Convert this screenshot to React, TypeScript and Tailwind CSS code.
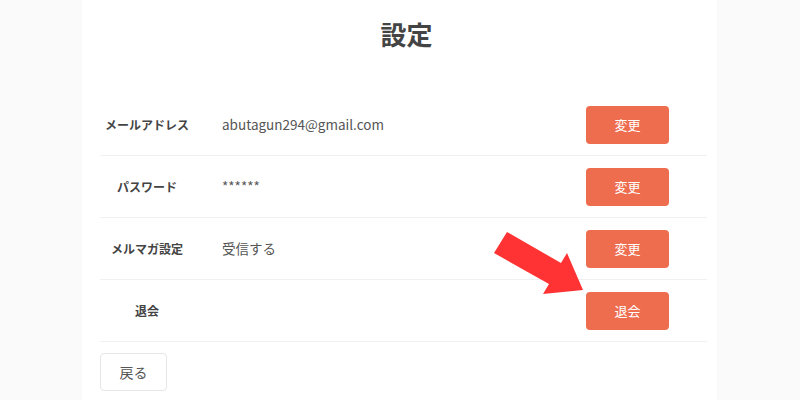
import React from "react";

const rows = [
  { label: "メールアドレス", value: "abutagun294@gmail.com", btn: "変更" },
  { label: "パスワード", value: "******", btn: "変更" },
  { label: "メルマガ設定", value: "受信する", btn: "変更" },
  { label: "退会", value: "", btn: "退会" },
];

export default function App() {
  return (
    <div
      className="relative w-[800px] h-[400px] bg-[#fafafa] overflow-hidden"
      style={{ fontFamily: '"Noto Sans CJK JP", "Noto Sans", sans-serif' }}
    >
      <div className="ml-[82px] w-[635px] h-[400px] bg-white pl-[18px] pr-[10px]">
        <div className="h-[94px] pt-[15px] flex justify-center pl-[6px]">
          <h1 className="text-[26px] font-bold text-[#444] leading-[38px]">設定</h1>
        </div>
        <div className="w-[607px]">
          {rows.map((r) => (
            <div key={r.label} className="h-[62px] flex items-center border-b border-[#f0f0f0]">
              <div className="w-[94px] text-center text-[12px] font-bold text-[#444]">{r.label}</div>
              <div className="flex-1 pl-[28px] text-[13.5px] text-[#555]">{r.value}</div>
              <button className="mr-[38px] w-[83px] h-[38px] rounded-[4px] bg-[#ee6d4f] text-white text-[13px]">
                {r.btn}
              </button>
            </div>
          ))}
          <button className="mt-[11px] w-[67px] h-[38px] rounded-[4px] border border-[#e6e6e6] bg-white text-[14px] text-[#555]">
            戻る
          </button>
        </div>
      </div>
      <svg className="absolute left-0 top-0 pointer-events-none" width="800" height="400">
        <polygon
          points="507,232 561,263 567,253 583,290 543,294 549,284 494,253"
          fill="#ff3333"
        />
      </svg>
    </div>
  );
}
